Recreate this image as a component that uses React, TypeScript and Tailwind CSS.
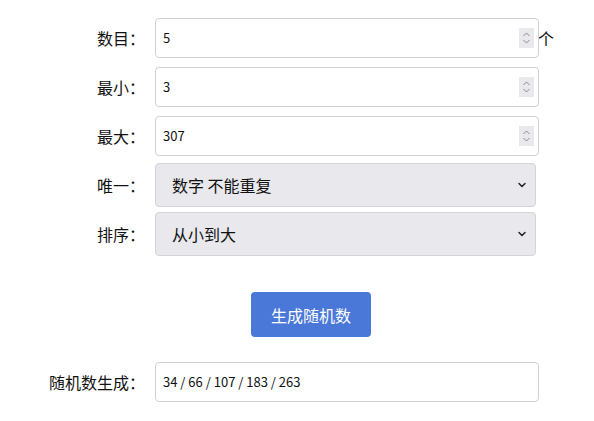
import { ChevronDown } from 'lucide-react';

const font = { fontFamily: '"Microsoft YaHei", "Noto Sans CJK SC", sans-serif' };

function Spinner() {
  return (
    <span className="absolute right-[4px] top-1/2 -translate-y-1/2 w-[15px] h-[20px] bg-[#e9e9ed] flex items-center justify-center">
      <svg width="9" height="14" viewBox="0 0 9 14" fill="none" stroke="#8a8a8a" strokeWidth="1">
        <path d="M1.5 5 L4.5 2 L7.5 5" />
        <path d="M1.5 9 L4.5 12 L7.5 9" />
      </svg>
    </span>
  );
}

function Label({ text }: { text: string }) {
  return <div className="w-[145px] shrink-0 text-right text-[16px] text-[#111]">{text}</div>;
}

function NumberField({ label, value, suffix }: { label: string; value: string; suffix?: string }) {
  return (
    <div className="flex items-center">
      <Label text={label} />
      <div className="ml-[10px] relative w-[384px] h-[40px] border border-[#cfcfd4] rounded-[4px] bg-white flex items-center pl-[7px] text-[13px] text-[#111]">
        {value}
        <Spinner />
      </div>
      {suffix && <span className="text-[16px] text-[#111] -ml-[1px]">{suffix}</span>}
    </div>
  );
}

function SelectField({ label, value }: { label: string; value: string }) {
  return (
    <div className="flex items-center">
      <Label text={label} />
      <div className="ml-[10px] relative w-[381px] h-[44px] border border-[#d4d4d8] rounded-[4px] bg-[#e8e8ed] flex items-center pl-[16px] text-[16px] text-[#111]">
        {value}
        <ChevronDown className="absolute right-[7px] top-1/2 -translate-y-1/2 w-[12px] h-[12px] text-[#222]" strokeWidth={3} />
      </div>
    </div>
  );
}

export default function App() {
  return (
    <div className="w-[594px] h-[421px] bg-white pt-[18px]" style={font}>
      <div className="flex flex-col gap-[9px]">
        <NumberField label="数目：" value="5" suffix="个" />
        <NumberField label="最小：" value="3" />
        <NumberField label="最大：" value="307" />
      </div>
      <div className="flex flex-col gap-[5px] mt-[7px]">
        <SelectField label="唯一：" value="数字 不能重复" />
        <SelectField label="排序：" value="从小到大" />
      </div>
      <div className="flex justify-center mt-[36px] pl-[28px]">
        <button className="w-[120px] h-[45px] rounded-[4px] bg-[#4a78d9] text-white text-[16px]">生成随机数</button>
      </div>
      <div className="flex items-center mt-[25px]">
        <Label text="随机数生成：" />
        <div className="ml-[10px] w-[384px] h-[40px] border border-[#cfcfd4] rounded-[4px] bg-white flex items-center pl-[7px] text-[13px] text-[#111]">
          34 / 66 / 107 / 183 / 263
        </div>
      </div>
    </div>
  );
}
